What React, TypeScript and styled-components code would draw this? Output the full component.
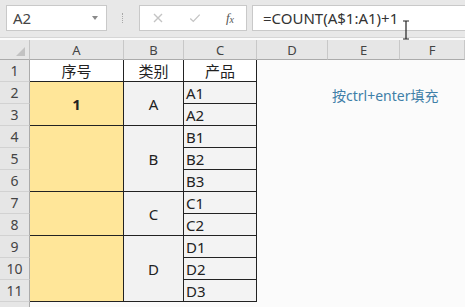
import styled, {createGlobalStyle} from "styled-components";

const GlobalStyle = createGlobalStyle`
  html, body {
    margin: 0;
    padding: 0;
    background: #ffffff;
    overflow: hidden;
  }
  body {
    font-family: "Noto Sans", "Noto Sans CJK SC", sans-serif;
  }
`;

const COLS = ["A", "B", "C", "D", "E", "F"];

interface Group {
    label: string,
    items: string[]
}

const GROUPS: Group[] = [
    {label: "A", items: ["A1", "A2"]},
    {label: "B", items: ["B1", "B2", "B3"]},
    {label: "C", items: ["C1", "C2"]},
    {label: "D", items: ["D1", "D2", "D3"]},
];

export default function App() {
    let row = 2;
    const cells: JSX.Element[] = [];
    GROUPS.forEach((g, gi) => {
        const span = g.items.length;
        cells.push(
            <SeqCell key={"a" + gi} style={{gridRow: `${row + 1} / span ${span}`}}>
                {gi === 0 ? "1" : ""}
            </SeqCell>
        );
        cells.push(
            <CatCell key={"b" + gi} style={{gridRow: `${row + 1} / span ${span}`}}>
                {g.label}
            </CatCell>
        );
        g.items.forEach((item, ii) => {
            cells.push(
                <ProductCell key={item} style={{gridRow: row + 1 + ii}}>{item}</ProductCell>
            );
        });
        row += span;
    });

    return (
        <Page>
            <GlobalStyle/>
            <Toolbar>
                <NameBox>
                    <span>A2</span>
                    <DropArrow/>
                </NameBox>
                <Grip/>
                <ButtonBox>
                    <ToolIcon viewBox="0 0 12 12">
                        <path d="M2 2 L10 10 M10 2 L2 10" stroke="#c4c4c4" strokeWidth="1.4" fill="none"/>
                    </ToolIcon>
                    <ToolIcon viewBox="0 0 14 12">
                        <path d="M1.5 6.5 L5 10 L12.5 2" stroke="#c4c4c4" strokeWidth="1.5" fill="none"/>
                    </ToolIcon>
                    <FxLabel>f<sub>x</sub></FxLabel>
                </ButtonBox>
                <FormulaBox>
                    =COUNT(A$1:A1)+1
                    <Cursor viewBox="0 0 8 20">
                        <path d="M1 1 H7 M4 1 V19 M1 19 H7" stroke="#222" strokeWidth="1.2" fill="none"/>
                    </Cursor>
                </FormulaBox>
            </Toolbar>
            <Sheet>
                <Corner>
                    <CornerMark viewBox="0 0 8 8">
                        <path d="M8 0 L8 8 L0 8 Z" fill="#c2c2c2"/>
                    </CornerMark>
                </Corner>
                {COLS.map(c => <ColHead key={c}>{c}</ColHead>)}
                {Array.from({length: 12}, (_, i) => (
                    <RowHead key={i} style={{gridRow: i + 2}}>{i < 11 ? i + 1 : ""}</RowHead>
                ))}
                <TitleCell style={{gridColumn: 2}}>序号</TitleCell>
                <TitleCell style={{gridColumn: 3}}>类别</TitleCell>
                <TitleCell style={{gridColumn: 4}}>产品</TitleCell>
                {cells}
                <Note>按ctrl+enter填充</Note>
            </Sheet>
        </Page>
    );
}

const Page = styled.div`
  width: 465px;
  height: 307px;
  overflow: hidden;
  background: #fbfbfb;
  position: relative;
`;

const Toolbar = styled.div`
  height: 38px;
  box-sizing: border-box;
  padding: 5px 0 6px 6px;
  background: #e8e8e8;
  border-bottom: 1px solid #d6d6d6;
  display: flex;
  align-items: stretch;
`;

const Box = styled.div`
  background: #ffffff;
  border: 1px solid #c9c9c9;
  box-sizing: border-box;
  display: flex;
  align-items: center;
`;

const NameBox = styled(Box)`
  width: 101px;
  padding: 0 6px 0 6px;
  justify-content: space-between;
  font-size: 15px;
  color: #444;
`;

const DropArrow = styled.div`
  width: 0;
  height: 0;
  border-left: 3px solid transparent;
  border-right: 3px solid transparent;
  border-top: 4px solid #8a8a8a;
  margin-right: 2px;
`;

const Grip = styled.div`
  width: 32px;
  display: flex;
  align-items: center;
  justify-content: center;
  &::after {
    content: "";
    width: 1px;
    height: 10px;
    border-left: 1px dotted #a8a8a8;
  }
`;

const ButtonBox = styled(Box)`
  width: 108px;
  padding: 0 12px 0 12px;
  justify-content: space-between;
`;

const ToolIcon = styled.svg`
  width: 12px;
  height: 12px;
`;

const FxLabel = styled.span`
  font-family: "Liberation Serif", serif;
  font-style: italic;
  font-size: 13px;
  color: #555;
  & sub {
    font-size: 10px;
    vertical-align: baseline;
    position: relative;
    top: 1px;
  }
`;

const FormulaBox = styled(Box)`
  flex: 1;
  margin-left: 5px;
  border-right: none;
  padding-left: 10px;
  font-size: 15px;
  color: #333;
  position: relative;
`;

const Cursor = styled.svg`
  position: absolute;
  left: 149px;
  top: 14px;
  width: 8px;
  height: 20px;
`;

const Sheet = styled.div`
  margin-top: 2px;
  display: grid;
  grid-template-columns: 30px 94px 60px 73px 71px 72px 65px;
  grid-template-rows: 20px repeat(12, 22px);
  font-size: 14px;
`;

const HeadBase = styled.div`
  background: #e6e6e6;
  color: #444;
  display: flex;
  align-items: center;
  justify-content: center;
  box-sizing: border-box;
`;

const Corner = styled(HeadBase)`
  border-right: 1px solid #c4c4c4;
  border-bottom: 1px solid #ababab;
  justify-content: flex-end;
  align-items: flex-end;
  padding: 0 4px 3px 0;
`;

const CornerMark = styled.svg`
  width: 9px;
  height: 9px;
`;

const ColHead = styled(HeadBase)`
  font-size: 13px;
  border-right: 1px solid #c8c8c8;
  border-bottom: 1px solid #ababab;
`;

const RowHead = styled(HeadBase)`
  grid-column: 1;
  font-size: 14px;
  border-right: 1px solid #ababab;
  border-bottom: 1px solid #d2d2d2;
`;

const DataCell = styled.div`
  box-sizing: border-box;
  border-right: 1px solid #222;
  border-bottom: 1px solid #222;
  display: flex;
  align-items: center;
  color: #222;
`;

const TitleCell = styled(DataCell)`
  grid-row: 2;
  background: #ffffff;
  justify-content: center;
  font-size: 15px;
  font-family: "Noto Sans CJK SC", sans-serif;
`;

const SeqCell = styled(DataCell)`
  grid-column: 2;
  background: #ffe699;
  justify-content: center;
  font-size: 15px;
  font-weight: bold;
`;

const CatCell = styled(DataCell)`
  grid-column: 3;
  background: #f2f2f2;
  justify-content: center;
  font-size: 15px;
`;

const ProductCell = styled(DataCell)`
  grid-column: 4;
  background: #f3f3f3;
  padding-left: 2px;
  font-size: 15px;
`;

const Note = styled.div`
  grid-column: 6 / span 2;
  grid-row: 3;
  display: flex;
  align-items: center;
  padding: 3px 0 0 4px;
  font-size: 14px;
  color: #3f7fa8;
  white-space: nowrap;
`;
